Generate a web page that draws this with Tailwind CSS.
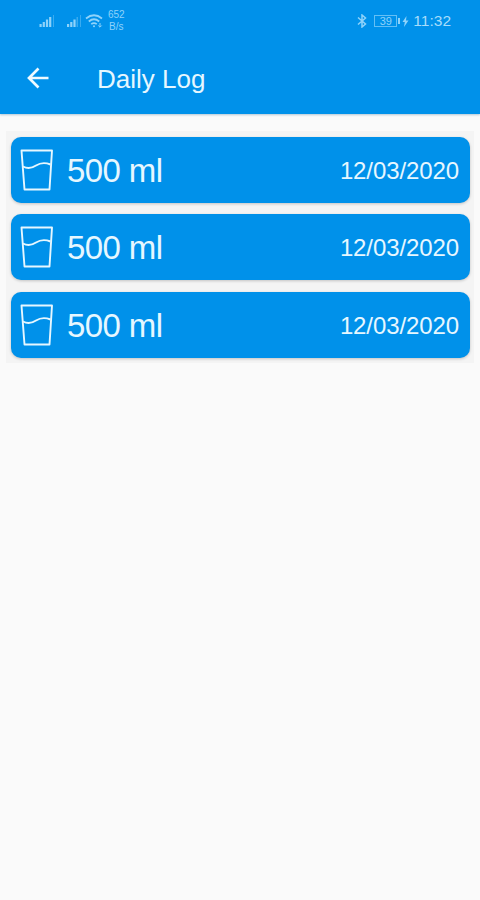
<!DOCTYPE html>
<html lang="en">

<head>
    <meta charset="UTF-8" />
    <meta name="viewport" content="width=device-width, initial-scale=1.0" />
    <title>Daily Log</title>
    <script src="https://cdn.jsdelivr.net/npm/@tailwindcss/browser@4"></script>
</head>

<body class="bg-[#fafafa] min-h-screen overflow-hidden font-['Liberation_Sans',Arial,sans-serif]">
    <!-- App bar -->
    <header class="h-[114px] bg-[#0091ea] shadow-[0_1px_2px_rgba(0,80,130,0.3)]">
        <!-- Status bar -->
        <div class="h-11 flex justify-between pl-[39px] pr-7 text-[#8fd3fa]">
            <div class="flex h-[42px] items-center">
                <svg class="w-4 h-3" viewBox="0 0 16 12" fill="currentColor">
                    <path d="M0.500 9h2.200v3H0.500zM3.700 7h2.200v5H3.700zM6.900 4.500h2.200V12H6.900zM10.100 2h2.200v10h-2.200z" />
                    <path d="M14 0h1v12h-1z" opacity=".4" />
                </svg>
                <svg class="w-4 h-3 ml-3" viewBox="0 0 16 12" fill="currentColor">
                    <path d="M0 9h2.200v3H0zM3.200 7h2.200v5H3.200zM6.400 4.500h2.200V12H6.400z" />
                    <path d="M9.500 2H11v10H9.500zM13 0h1v12h-1z" opacity=".4" />
                </svg>
                <svg class="w-[18px] h-[14px] ml-0.5" viewBox="0 0 18 14" fill="none" stroke="currentColor" stroke-width="1.700">
                    <path d="M1 4.500Q9-2 17 4.500M3.800 7.500Q9 3 14.200 7.500M6.200 10.200Q9 8 11.800 10.200" />
                    <circle cx="9" cy="12.200" r="1" fill="currentColor" stroke="none" />
                    <path d="M15 9v4M13.300 11.500 15 13.200l1.700-1.700" stroke-width="1" />
                </svg>
                <div class="ml-[5px] flex flex-col items-center text-[10px] leading-[12px]">
                    <span>652</span>
                    <span>B/s</span>
                </div>
            </div>
            <div class="flex h-[42px] items-center">
                <svg class="w-[10px] h-[14px]" viewBox="0 0 10 14" fill="none" stroke="currentColor" stroke-width="1.500">
                    <path d="M1 3.500 8.500 10 5 13V1l3.500 3L1 10.500" />
                </svg>
                <div class="ml-[7px] w-[23px] h-[12px] border border-[#8fd3fa]/70 text-[11px] leading-[11px] text-center">39</div>
                <div class="w-[2px] h-[6px] bg-[#8fd3fa] ml-px"></div>
                <svg class="w-[7px] h-[11px] ml-[2px]" viewBox="0 0 7 11" fill="currentColor">
                    <path d="M4.500 0 0.500 6h2.300L2 11l4.500-6.500H4z" />
                </svg>
                <span class="ml-[4px] mr-px text-[15.5px] leading-none text-[#a8ddfb]">11:32</span>
            </div>
        </div>
        <!-- Title row -->
        <div class="h-[70px] flex items-center pl-[27px]">
            <svg class="w-[22px] h-[22px] -mt-[2px]" viewBox="0 0 22 22" fill="none" stroke="#effaff" stroke-width="2.700">
                <path d="M21.500 11H2M11.500 1.500 2 11l9.500 9.500" />
            </svg>
            <h1 class="ml-[48px] text-[26px] leading-none text-[#e6f7ff]">Daily Log</h1>
        </div>
    </header>

    <!-- Log entries -->
    <main class="mx-[6px] mt-[17px] pt-[5.5px] px-[5px] pb-[5px] h-[232px] flex flex-col gap-[11.5px] bg-[#f4f4f4]" id="logList"></main>

    <script>
        const logList = document.getElementById("logList");
        const entries = [
            { amount: "500 ml", date: "12/03/2020" },
            { amount: "500 ml", date: "12/03/2020" },
            { amount: "500 ml", date: "12/03/2020" },
        ];

        entries.forEach((entry) => {
            const card = document.createElement("div");
            card.className = "h-[66px] w-[458.5px] shrink-0 flex items-center pl-[9px] pr-[10.5px] rounded-[10px] bg-[#0091ea] text-[#e6f7ff] shadow-[0_1px_3px_rgba(0,0,0,0.2)]";
            card.innerHTML = `
                <svg class="w-[33px] h-[42px]" viewBox="0 0 33 42" fill="none" stroke="currentColor" stroke-width="1.900" stroke-linejoin="round">
                    <path d="M1.500 1.500h30.500l-2.500 39H4.500z" />
                    <path d="M3 17.500c4.500 2.500 8.500 2 13-1c5-3.200 9-3.200 14.500-1" />
                </svg>
                <span class="ml-[14px] mt-px text-[33px] leading-none tracking-[-0.6px]">${entry.amount}</span>
                <span class="ml-auto text-[24px] leading-none tracking-[-0.1px] mt-[2px]">${entry.date}</span>
            `;
            logList.appendChild(card);
        });
    </script>
</body>

</html>
